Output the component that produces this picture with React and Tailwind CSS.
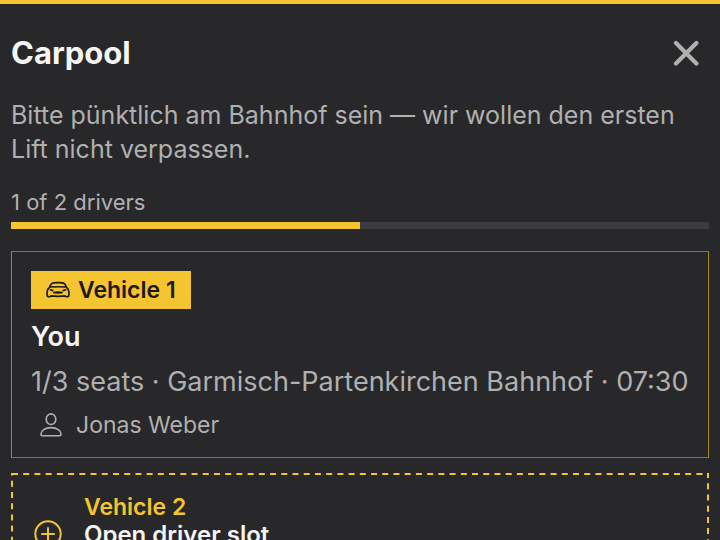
import { clsx } from 'clsx';

const plan = {
  title: 'Carpool',
  note: 'Bitte pünktlich am Bahnhof sein — wir wollen den ersten Lift nicht verpassen.',
  drivers: 1,
  driversNeeded: 2,
};

const vehicles = [
  {
    id: 1,
    driver: 'You',
    details: '1/3 seats · Garmisch-Partenkirchen Bahnhof · 07:30',
    passengers: ['Jonas Weber'],
  },
];

function CloseIcon() {
  return (
    <svg viewBox="0 0 26 26" className="size-[26px]" fill="none" stroke="currentColor" strokeWidth="4.2" strokeLinecap="round" aria-hidden="true">
      <path d="M3 3l20.4 20.4M23.4 3L3 23.4" />
    </svg>
  );
}

function CarIcon({ className }) {
  return (
    <svg viewBox="0 0 24 18" className={className} fill="none" stroke="currentColor" strokeWidth="1.7" strokeLinecap="round" strokeLinejoin="round" aria-hidden="true">
      <path d="M3.2 6.8L4.8 3.6Q5.6 2 7.4 1.8Q12 1.3 16.6 1.8Q18.4 2 19.2 3.6L20.8 6.8Q22.9 8.4 22.9 11V14.2Q22.9 15.7 21.4 15.7H20.4Q19.4 15.7 19 14.9Q12 15.7 5 14.9Q4.6 15.7 3.6 15.7H2.6Q1.1 15.7 1.1 14.2V11Q1.1 8.4 3.2 6.8Z" />
      <path d="M4.4 6.1Q12 5.3 19.6 6.1" strokeWidth="1.5" />
      <path d="M4.4 8.8L6.8 9.6M19.6 8.8L17.2 9.6" strokeWidth="1.7" />
      <path d="M8.2 11.1Q12 10.4 15.8 11.1L16.6 11.9Q12 12.6 7.4 11.9Z" fill="currentColor" strokeWidth=".9" />
    </svg>
  );
}

function PersonIcon({ className }) {
  return (
    <svg viewBox="0 0 22 24" className={className} fill="none" stroke="currentColor" strokeWidth="1.6" strokeLinejoin="round" aria-hidden="true">
      <ellipse cx="11" cy="6.2" rx="4.8" ry="5.3" />
      <path d="M2.4 22.8Q.9 22.8 .9 21.2C.9 18 5 14.6 11 14.6S21.1 18 21.1 21.2Q21.1 22.8 19.6 22.8Z" />
    </svg>
  );
}

function PlusCircleIcon({ className }) {
  return (
    <svg viewBox="0 0 28 28" className={className} fill="none" stroke="currentColor" strokeWidth="2" strokeLinecap="round" aria-hidden="true">
      <circle cx="14" cy="14" r="12.7" />
      <path d="M14 8v12M8 14h12" />
    </svg>
  );
}

// Longer dashes than border-dashed gives
function DashedOutline() {
  return (
    <svg className="absolute inset-0 size-full text-[#f5c431]" stroke="currentColor" strokeWidth="4" strokeDasharray="6 5.22" aria-hidden="true">
      <line x1="1" y1="0" x2="100%" y2="0" />
      <line x1="0" y1="0" x2="0" y2="100%" strokeDashoffset="3.5" />
      <line x1="100%" y1="0" x2="100%" y2="100%" strokeDashoffset="1" />
    </svg>
  );
}

function DriverProgress({ value, max }) {
  return (
    <div className="mt-[22px]">
      <p className="text-[22px] leading-7">
        {value} of {max} drivers
      </p>
      <div className="mt-1.5 h-[7px] bg-[#3c3b3f]" role="progressbar" aria-valuenow={value} aria-valuemax={max} aria-label="Drivers">
        <div className="h-full bg-[#f5c431]" style={{ width: `${(value / max) * 100}%` }} />
      </div>
    </div>
  );
}

function VehicleCard({ vehicle }) {
  return (
    <article className="border border-x-[#a4852a] border-y-[#8f722b] px-[19px] pt-[19px] pb-[15px]">
      <span className="inline-flex h-[38px] items-center gap-2 bg-[#f5c431] px-[15px] text-[23px] leading-7 font-semibold text-[#1c1b1a]">
        <CarIcon className="h-[18px] w-6" />
        Vehicle {vehicle.id}
      </span>
      <h2 className="mt-2.5 text-[27px] leading-9 font-semibold text-[#f5f5f5]">{vehicle.driver}</h2>
      <p className="mt-[9px] text-[27px] leading-9 whitespace-nowrap">{vehicle.details}</p>
      <ul className="mt-2">
        {vehicle.passengers.map((name) => (
          <li key={name} className="flex items-center gap-3.5 px-[9px] text-[23px] leading-[34px]">
            <PersonIcon className="h-6 w-[22px]" />
            {name}
          </li>
        ))}
      </ul>
    </article>
  );
}

function OpenSlot({ number }) {
  return (
    <button type="button" className="relative flex w-full items-start gap-[22px] px-[23px] py-5 text-left">
      <DashedOutline />
      <PlusCircleIcon className="mt-[27px] size-7 shrink-0 text-[#f5c431]" />
      <span className="text-[23px] leading-7 font-semibold">
        <span className="block text-[#f5c431]">Vehicle {number}</span>
        <span className="block text-2xl leading-7 text-[#f5f5f5]">Open driver slot</span>
      </span>
    </button>
  );
}

export default function App() {
  return (
    <div
      className={clsx(
        'h-screen overflow-hidden border-t-4 border-[#f5c431] bg-[#28282a]',
        'px-[11px] font-[Inter,sans-serif] text-[#b0b0b0]',
      )}
    >
      <header className="flex items-center justify-between pt-7 pr-2.5">
        <h1 className="text-[31px] leading-[42px] font-bold text-[#f5f5f5]">{plan.title}</h1>
        <button type="button" aria-label="Close">
          <CloseIcon />
        </button>
      </header>

      <p className="mt-6 text-[25px] leading-[34px]">{plan.note}</p>

      <DriverProgress value={plan.drivers} max={plan.driversNeeded} />

      <section className="mt-[22px] grid gap-[15px]">
        {vehicles.map((vehicle) => (
          <VehicleCard key={vehicle.id} vehicle={vehicle} />
        ))}
        <OpenSlot number={vehicles.length + 1} />
      </section>
    </div>
  );
}
